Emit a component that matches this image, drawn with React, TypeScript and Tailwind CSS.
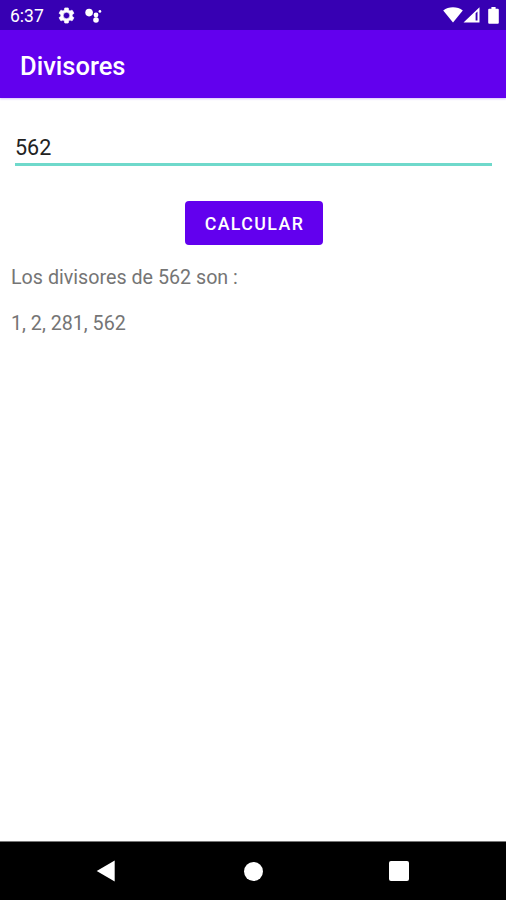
import { useState } from "react";

function getDivisors(n: number) {
  const divisors: number[] = [];
  for (let i = 1; i <= n; i++) {
    if (n % i === 0) divisors.push(i);
  }
  return divisors;
}

function GearIcon() {
  return (
    <svg
      className="size-[19px]"
      viewBox="0 0 24 24"
      fill="currentColor"
      stroke="currentColor"
      strokeWidth="0.8"
    >
      <path d="M19.14 12.94c.04-.3.06-.61.06-.94 0-.32-.02-.64-.07-.94l2.03-1.58a.49.49 0 0 0 .12-.61l-1.92-3.32a.49.49 0 0 0-.59-.22l-2.39.96a7 7 0 0 0-1.62-.94l-.36-2.54a.48.48 0 0 0-.48-.41h-3.84a.48.48 0 0 0-.47.41l-.36 2.54c-.59.24-1.13.57-1.62.94l-2.39-.96a.48.48 0 0 0-.59.22L2.74 8.87a.48.48 0 0 0 .12.61l2.03 1.58c-.05.3-.09.63-.09.94s.02.64.07.94l-2.03 1.58a.49.49 0 0 0-.12.61l1.92 3.32c.12.22.37.29.59.22l2.39-.96c.5.38 1.03.7 1.62.94l.36 2.54c.05.24.24.41.48.41h3.84c.24 0 .44-.17.47-.41l.36-2.54a7 7 0 0 0 1.62-.94l2.39.96c.22.08.47 0 .59-.22l1.92-3.32a.48.48 0 0 0-.12-.61zM12 16.1a4.1 4.1 0 1 1 0-8.2 4.1 4.1 0 0 1 0 8.2z" />
    </svg>
  );
}

function AssistantIcon() {
  return (
    <svg className="h-[15px] w-[18px]" viewBox="0 0 18 15" fill="currentColor">
      <circle cx="4.1" cy="4.6" r="3.8" />
      <circle cx="11" cy="7" r="2.4" />
      <circle cx="11" cy="12" r="2.8" />
      <circle cx="14.9" cy="3.4" r="1.4" />
    </svg>
  );
}

function StatusBar() {
  return (
    <div className="flex h-[30px] shrink-0 items-center bg-[#3700b3] pr-[7px] pl-2.5 text-white">
      <span className="w-[47px] pt-[3px] text-[17.5px] leading-none">6:37</span>
      <GearIcon />
      <div className="ml-[9px]">
        <AssistantIcon />
      </div>
      <svg
        className="ml-auto h-4 w-[20px]"
        viewBox="0 0 20 16"
        fill="currentColor"
      >
        <path d="M.2 3.6C5.5-.8 14.5-.8 19.8 3.6L10 15.6z" />
      </svg>
      <svg className="h-4 w-[17px]" viewBox="0 0 17 16" fill="currentColor">
        <path
          fillRule="evenodd"
          d="M.5 15.5 16.5.2V15.5zM12.6 6.2V13.6h1.9V4.4z"
        />
      </svg>
      <svg
        className="ml-2 h-[17px] w-[11px]"
        viewBox="0 0 11 17"
        fill="currentColor"
      >
        <path d="M3.4 0h4.2v1.8h2.2q1 0 1 1v12.9q0 1-1 1H1.2q-1 0-1-1V2.8q0-1 1-1h2.2z" />
      </svg>
    </div>
  );
}

function NavigationBar() {
  return (
    <div className="flex h-[59px] shrink-0 items-center border-t border-[#777] bg-black pl-24 text-white">
      <button aria-label="Back">
        <svg className="h-[22px] w-[19px]" viewBox="0 0 19 22" fill="currentColor">
          <path d="M.7 11 18.7.6v20.8z" />
        </svg>
      </button>
      <button aria-label="Home" className="ml-[129px]">
        <div className="size-[19px] rounded-full bg-white" />
      </button>
      <button aria-label="Recent apps" className="ml-[126px]">
        <div className="size-5 rounded-[2px] bg-white" />
      </button>
    </div>
  );
}

export default function App() {
  const [value, setValue] = useState("562");
  const [result, setResult] = useState(562);

  return (
    <div className="flex h-screen flex-col overflow-hidden bg-white font-[Roboto,sans-serif]">
      <StatusBar />
      <header className="flex h-[68px] shrink-0 items-center bg-[#6200ee] pt-1.5 pl-5 shadow-[0_1px_2px_rgba(98,0,238,0.25)]">
        <h1 className="text-[25.5px] leading-none font-medium text-white">
          Divisores
        </h1>
      </header>

      <main className="flex flex-1 flex-col pt-[33px] pr-[9px] pl-[11px]">
        <input
          className="ml-1 mr-[5px] h-[35px] border-b-[3px] border-[#6fd9cb] text-[21.5px] text-[#222] outline-none"
          inputMode="numeric"
          value={value}
          onChange={(e) => setValue(e.target.value)}
        />
        <button
          className="mt-[35px] h-11 w-[138px] self-center rounded-[4px] bg-[#6200ee] pt-0.5 pl-px text-[17.8px] font-medium tracking-[1.4px] text-white"
          onClick={() => setResult(Number(value))}
        >
          CALCULAR
        </button>
        <p className="mt-[21px] text-[19.7px] leading-[23px] text-[#757575]">
          Los divisores de {result} son :
        </p>
        <p className="mt-[23px] text-[19.7px] leading-[23px] text-[#757575]">
          {getDivisors(result).join(", ")}
        </p>
      </main>

      <NavigationBar />
    </div>
  );
}
